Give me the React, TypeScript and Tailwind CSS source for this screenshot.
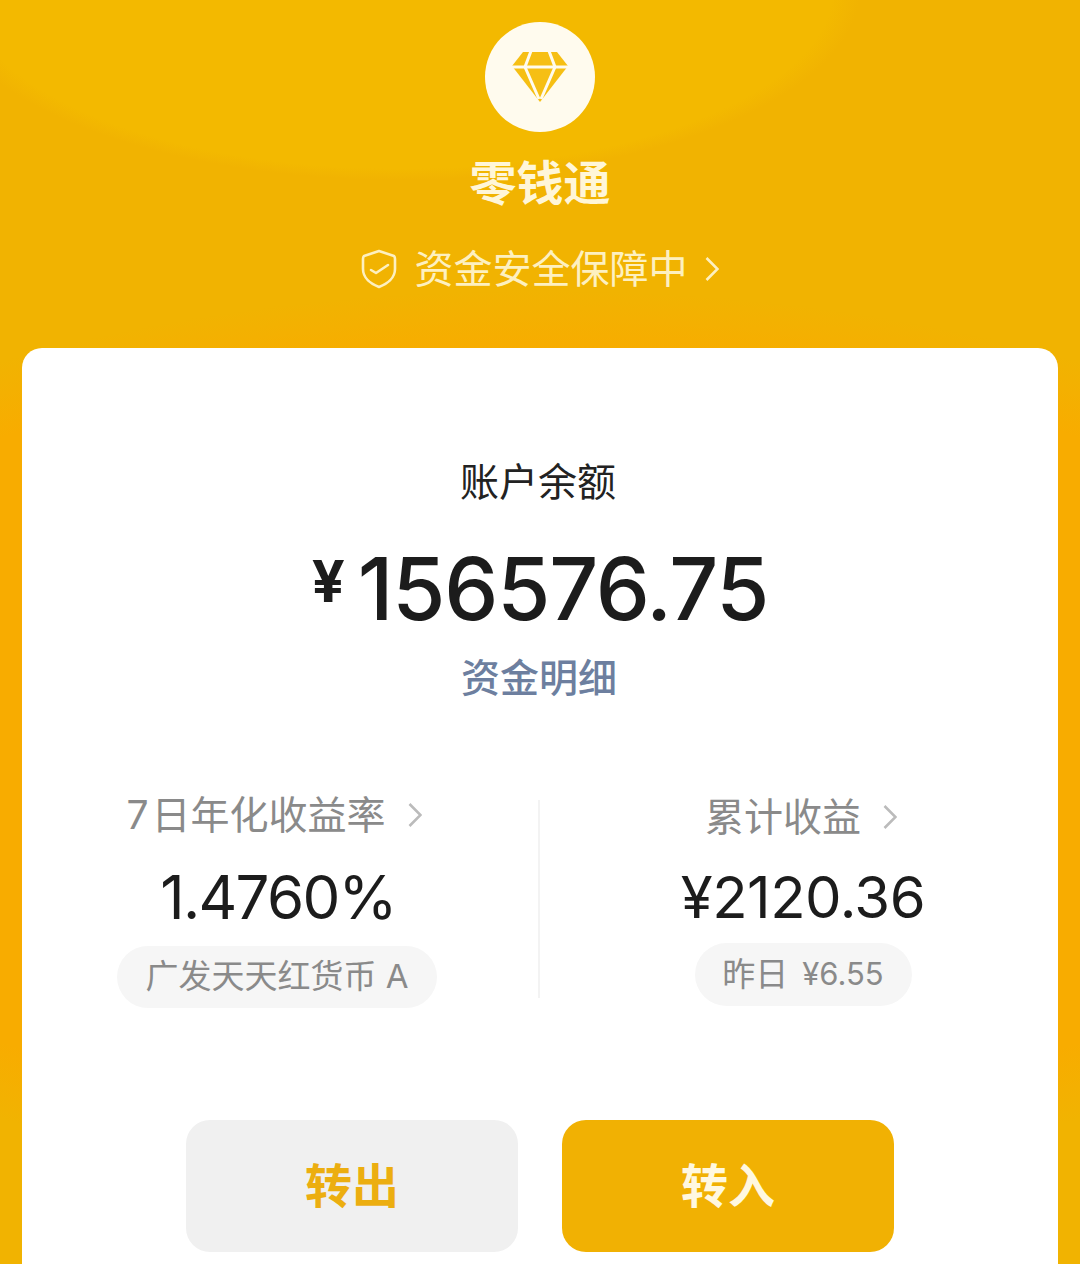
const cjk = "font-['Inter','Noto_Sans_CJK_SC',sans-serif]";

function Chevron({ className }: { className: string }) {
  return (
    <svg viewBox="0 0 14 26" fill="none" stroke="currentColor" strokeWidth="2.6" className={className}>
      <path d="M1.5 2 L12.5 13 L1.5 24" />
    </svg>
  );
}

function Diamond() {
  return (
    <svg viewBox="0 0 56 50" className="w-[56px] h-[50px]">
      <polygon points="11,0 45,0 56,14 28,50 0,14" fill="#f6bf14" />
      <g fill="none" stroke="#fffbee" strokeWidth="3">
        <path d="M0 15 H56" />
        <path d="M19 -1 L13 15 L27 47" />
        <path d="M37 -1 L43 15 L29 47" />
      </g>
    </svg>
  );
}

function Shield() {
  return (
    <svg viewBox="0 0 36 40" fill="none" stroke="#fdf0c0" strokeWidth="2.6" strokeLinejoin="round" strokeLinecap="round" className="w-[36px] h-[40px]">
      <path d="M18 2 L33 7 C34 8 34 9 34 10 V20 C34 29 26 35 18 38 C10 35 2 29 2 20 V10 C2 9 2 8 3 7 Z" />
      <path d="M10 21 L15 24 L27 16" />
    </svg>
  );
}

export default function App() {
  return (
    <div className={`${cjk} w-[1080px] h-[1264px] overflow-hidden flex flex-col items-center bg-[#f1b301] bg-[radial-gradient(ellipse_460px_190px_at_400px_-10px,#f3b900_94%,transparent_100%),radial-gradient(ellipse_1000px_450px_at_540px_740px,#f8ac00_86%,transparent_100%)]`}>
      <div className="mt-[22px] w-[110px] h-[110px] rounded-full bg-[#fffbee] flex items-center justify-center">
        <Diamond />
      </div>
      <div className="mt-[21px] h-[60px] leading-[60px] text-[47px] font-bold text-[#fff6d8]">零钱通</div>
      <div className="mt-[26px] h-[60px] flex items-center text-[#fdf0c0] text-[39px] font-normal">
        <Shield />
        <span className="ml-[17px] leading-[60px]">资金安全保障中</span>
        <Chevron className="ml-[17px] w-[14px] h-[26px]" />
      </div>
      <div className="mt-[49px] w-[1036px] flex-1 rounded-t-[20px] bg-white flex flex-col items-center">
        <div className="mt-[108px] h-[52px] leading-[52px] text-[39px] text-[#222222] -ml-[4px]">账户余额</div>
        <div className="mt-[36px] h-[90px] flex items-center text-[#1c1c1c]">
          <span className="text-[58px] font-bold leading-[90px] -mt-[16px] mr-[13px]">¥</span>
          <span className="text-[86px] leading-[90px] font-[550] tracking-[-1.2px]">156576.75</span>
        </div>
        <div className="mt-[18px] h-[52px] leading-[52px] text-[39px] font-medium text-[#6d7f9f] -ml-[2px]">资金明细</div>
        <div className="mt-[89px] w-full grid grid-cols-[516px_2px_1fr]">
          <div className="flex flex-col items-center pr-[6px]">
            <div className="h-[44px] flex items-center text-[39px] text-[#8a8a8a] -ml-[6px]">
              <span className="leading-[44px]"><span className="mr-[3px]">7</span>日年化收益率</span>
              <Chevron className="ml-[22px] w-[14px] h-[26px] text-[#bbbbbb]" />
            </div>
            <div className="mt-[18px] ml-[2px] h-[84px] leading-[84px] text-[60px] tracking-[-1.7px] text-[#1c1c1c]">1.4760%</div>
            <div className="mt-[7px] h-[62px] w-[320px] rounded-full bg-[#f6f6f6] flex items-center justify-center text-[33px] text-[#8a8a8a]">广发天天红货币 A</div>
          </div>
          <div className="mt-[7px] h-[198px] bg-[#f3f3f3]"></div>
          <div className="flex flex-col items-center pl-[8px]">
            <div className="h-[44px] flex items-center text-[39px] text-[#8a8a8a] mt-[2px] -ml-[4px]">
              <span className="leading-[44px]">累计收益</span>
              <Chevron className="ml-[22px] w-[14px] h-[26px] text-[#bbbbbb]" />
            </div>
            <div className="mt-[16px] h-[84px] leading-[84px] text-[58px] tracking-[-0.5px] text-[#1c1c1c]">¥2120.36</div>
            <div className="mt-[4px] h-[63px] w-[217px] rounded-full bg-[#f6f6f6] flex items-center justify-center text-[33px] text-[#8a8a8a]">
              昨日<span className="ml-[14px] text-[31px]">¥6.55</span>
            </div>
          </div>
        </div>
        <div className="mt-[112px] flex gap-[44px]">
          <div className="w-[332px] h-[132px] rounded-[24px] bg-[#f0f0f0] flex items-center justify-center text-[47px] font-bold text-[#ecae10]">转出</div>
          <div className="w-[332px] h-[132px] rounded-[24px] bg-[#f1b103] flex items-center justify-center text-[47px] font-bold text-[#fff8e0]">转入</div>
        </div>
      </div>
    </div>
  );
}
